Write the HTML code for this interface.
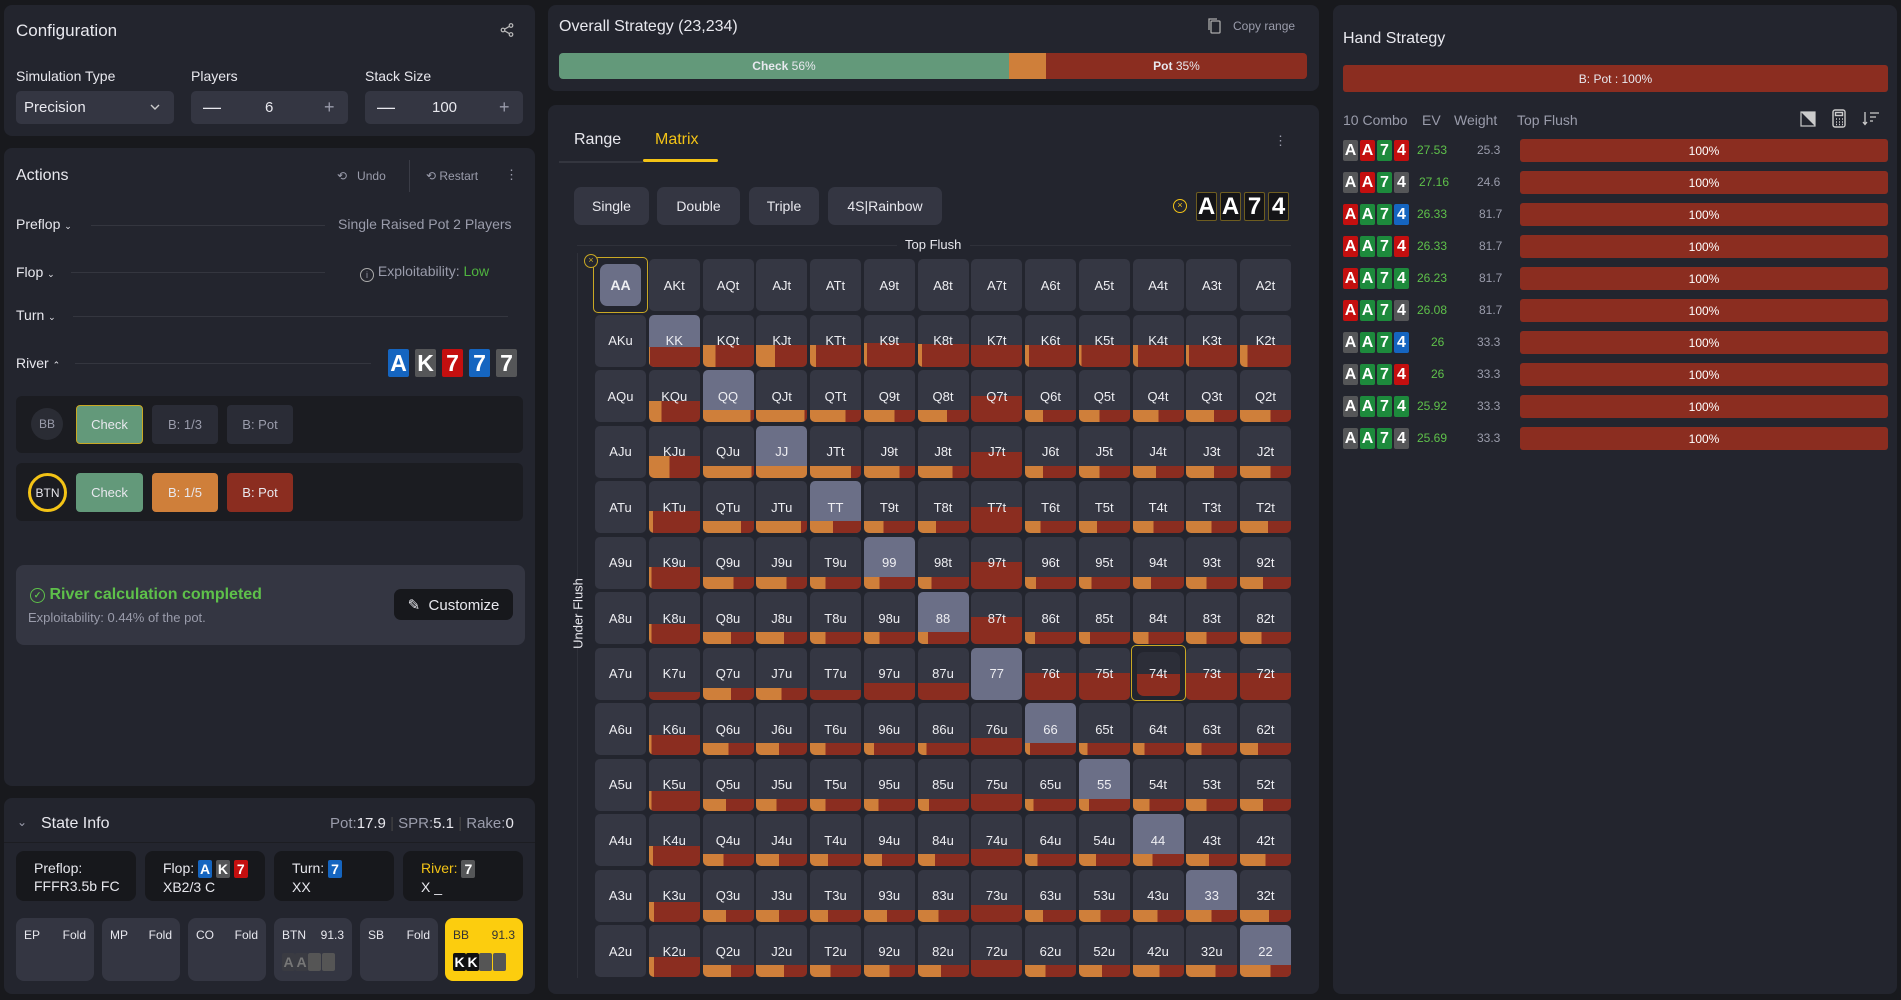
<!DOCTYPE html>
<html><head><meta charset="utf-8"><style>
*{box-sizing:border-box;margin:0;padding:0}
body{width:1901px;height:1000px;background:#18191d;font-family:"Liberation Sans",sans-serif;color:#e8e8ee;position:relative;overflow:hidden}
.a{position:absolute}
.pn{position:absolute;background:#23252e;border-radius:8px}
.g{color:#9a9cab}
.inp{position:absolute;background:#343642;border-radius:5px;height:33px;top:91px;font-size:15px;display:flex;align-items:center}
.card{display:inline-flex;align-items:center;justify-content:center;color:#fff;font-weight:bold;border-radius:2px;vertical-align:middle}
.bl{background:#1565c0}.gr{background:#555658}.rd{background:#c40f0f}.gn{background:#1d8a3c}
.btn{position:absolute;border-radius:4px;display:flex;align-items:center;justify-content:center;font-size:13px}
.line{position:absolute;height:1px;background:#34363f}
#grid{position:absolute;left:595px;top:259px;display:grid;grid-template-columns:repeat(13,51px);grid-auto-rows:52px;column-gap:2.75px;row-gap:3.5px}
#grid div{position:relative;background:#353743;border-radius:5px;overflow:hidden;display:flex;align-items:center;justify-content:center;font-size:13px;color:#eeeef2}
#grid div span{position:relative;z-index:1}
#grid div.p{background:#6b6f87}
#grid b{position:absolute;left:0;right:0;bottom:0;height:12px;background:linear-gradient(90deg,#cf7f3a var(--o),#8b2d20 var(--o))}
.fb{position:absolute;background:#343642;border-radius:7px;font-size:14px;display:flex;align-items:center;justify-content:center;height:38px;top:187px}
.st{position:absolute;top:851px;height:50px;width:120px;background:#17181c;border-radius:8px;font-size:14px;padding:8px 0 0 18px;line-height:18px}
.se{position:absolute;top:918px;height:63px;width:78px;background:#343642;border-radius:8px;font-size:12px}
.se .l{position:absolute;left:8px;top:10px}.se .r{position:absolute;right:8px;top:10px}
.row{position:absolute;left:1343px;height:23px;width:545px;font-size:12px}
.row .cs{position:absolute;left:0;top:1px}
.row .cs .card{width:15px;height:21px;font-size:16px;margin-right:2px}
.hb{position:absolute;left:177px;width:368px;height:23px;top:0;background:#8b2d20;border-radius:3px;display:flex;align-items:center;justify-content:center;font-size:12px;color:#fff}
</style></head><body>

<!-- Configuration -->
<div class="pn" style="left:4px;top:5px;width:531px;height:131px"></div>
<div class="a" style="left:16px;top:21px;font-size:17px">Configuration</div>
<svg class="a" style="left:500px;top:23px" width="14" height="14" viewBox="0 0 14 14" fill="none" stroke="#bbb" stroke-width="1.2"><circle cx="11" cy="2.5" r="1.8"/><circle cx="3" cy="7" r="1.8"/><circle cx="11" cy="11.5" r="1.8"/><path d="M4.6 6.1 9.4 3.4M4.6 7.9 9.4 10.6"/></svg>
<div class="a" style="left:16px;top:68px;font-size:14px">Simulation Type</div>
<div class="a" style="left:191px;top:68px;font-size:14px">Players</div>
<div class="a" style="left:365px;top:68px;font-size:14px">Stack Size</div>
<div class="inp" style="left:16px;width:158px;padding-left:8px">Precision<svg class="a" style="left:133px;top:12px" width="12" height="8" viewBox="0 0 12 8" fill="none" stroke="#ccc" stroke-width="1.4"><path d="M2 2l4 4 4-4"/></svg></div>
<div class="inp" style="left:191px;width:157px"><span class="a" style="left:12px;font-size:18px">—</span><span class="a" style="left:74px">6</span><span class="a g" style="left:133px;font-size:18px">+</span></div>
<div class="inp" style="left:365px;width:158px"><span class="a" style="left:12px;font-size:18px">—</span><span class="a" style="left:67px">100</span><span class="a g" style="left:134px;font-size:18px">+</span></div>

<!-- Actions -->
<div class="pn" style="left:4px;top:148px;width:531px;height:638px"></div>
<div class="a" style="left:16px;top:167px;font-size:16px">Actions</div>
<div class="a g" style="left:337px;top:169px;font-size:12px">⟲&nbsp;&nbsp;&nbsp;Undo</div>
<div class="a" style="left:409px;top:160px;width:1px;height:32px;background:#3a3c46"></div>
<div class="a g" style="left:426px;top:169px;font-size:12px">⟲ Restart</div>
<div class="a g" style="left:505px;top:167px;font-size:13px">⋮</div>

<div class="a" style="left:16px;top:216px;font-size:14px">Preflop <span style="font-size:9px">⌄</span></div>
<div class="line" style="left:91px;top:225px;width:234px"></div>
<div class="a g" style="left:338px;top:216px;font-size:14px">Single Raised Pot 2 Players</div>
<div class="a" style="left:16px;top:264px;font-size:14px">Flop <span style="font-size:9px">⌄</span></div>
<div class="line" style="left:71px;top:272px;width:254px"></div>
<div class="a g" style="left:360px;top:263px;font-size:14px"><span style="display:inline-block;width:14px;height:14px;border:1.3px solid #aaa;border-radius:50%;font-size:9px;text-align:center;line-height:12px;vertical-align:-2px">i</span> Exploitability: <span style="color:#4fb33f">Low</span></div>
<div class="a" style="left:16px;top:307px;font-size:14px">Turn <span style="font-size:9px">⌄</span></div>
<div class="line" style="left:73px;top:316px;width:435px"></div>
<div class="a" style="left:16px;top:355px;font-size:14px">River <span style="font-size:9px">⌃</span></div>
<div class="line" style="left:75px;top:363px;width:296px"></div>
<div class="a" style="left:388px;top:349px;font-size:0">
<span class="card bl" style="width:21px;height:28px;font-size:23px;margin-right:6px">A</span><span class="card gr" style="width:21px;height:28px;font-size:23px;margin-right:6px">K</span><span class="card rd" style="width:21px;height:28px;font-size:23px;margin-right:6px">7</span><span class="card bl" style="width:21px;height:28px;font-size:23px;margin-right:6px">7</span><span class="card gr" style="width:21px;height:28px;font-size:23px">7</span></div>

<div class="a" style="left:16px;top:396px;width:507px;height:57px;background:#1b1c21;border-radius:6px"></div>
<div class="a g" style="left:31px;top:408px;width:32px;height:32px;border-radius:50%;background:#2a2c34;font-size:12px;display:flex;align-items:center;justify-content:center">BB</div>
<div class="btn" style="left:76px;top:405px;width:67px;height:39px;background:#63997a;border:1.5px solid #c9a824">Check</div>
<div class="btn g" style="left:152px;top:405px;width:66px;height:39px;background:#2a2c36">B: 1/3</div>
<div class="btn g" style="left:227px;top:405px;width:66px;height:39px;background:#2a2c36">B: Pot</div>
<div class="a" style="left:16px;top:463px;width:507px;height:58px;background:#1b1c21;border-radius:6px"></div>
<div class="a" style="left:28px;top:473px;width:39px;height:39px;border-radius:50%;border:3.5px solid #f3c316;font-size:12px;display:flex;align-items:center;justify-content:center">BTN</div>
<div class="btn" style="left:76px;top:473px;width:67px;height:39px;background:#63997a">Check</div>
<div class="btn" style="left:152px;top:473px;width:66px;height:39px;background:#cf7f3a">B: 1/5</div>
<div class="btn" style="left:227px;top:473px;width:66px;height:39px;background:#8b2d20">B: Pot</div>

<div class="a" style="left:16px;top:565px;width:509px;height:80px;background:#343642;border-radius:8px"></div>
<div class="a" style="left:30px;top:586px;font-size:16px;font-weight:bold;color:#5ec04a"><span style="display:inline-block;width:15px;height:15px;border:1.5px solid #5ec04a;border-radius:50%;font-size:9px;text-align:center;line-height:12px;vertical-align:1px">✓</span> River calculation completed</div>
<div class="a g" style="left:28px;top:610px;font-size:13px">Exploitability: 0.44% of the pot.</div>
<div class="btn" style="left:394px;top:589px;width:119px;height:31px;background:#17181c;border-radius:7px;font-size:15px">✎&nbsp;&nbsp;Customize</div>

<!-- State Info -->
<div class="pn" style="left:4px;top:798px;width:531px;height:196px"></div>
<div class="a g" style="left:17px;top:815px;font-size:12px">⌄</div>
<div class="a" style="left:41px;top:815px;font-size:16px">State Info</div>
<div class="a g" style="left:330px;top:815px;font-size:15px">Pot:<span style="color:#e8e8ee">17.9</span> <span style="color:#444">|</span> SPR:<span style="color:#e8e8ee">5.1</span> <span style="color:#444">|</span> Rake:<span style="color:#e8e8ee">0</span></div>
<div class="line" style="left:4px;top:842px;width:531px;background:#1c1d22"></div>
<div class="st" style="left:16px">Preflop:<br>FFFR3.5b FC</div>
<div class="st" style="left:145px">Flop: <span class="card bl" style="width:14px;height:18px;font-size:14px">A</span> <span class="card gr" style="width:14px;height:18px;font-size:14px">K</span> <span class="card rd" style="width:14px;height:18px;font-size:14px">7</span><br>XB2/3 C</div>
<div class="st" style="left:274px">Turn: <span class="card bl" style="width:14px;height:18px;font-size:14px">7</span><br>XX</div>
<div class="st" style="left:403px"><span style="color:#f3c316">River:</span> <span class="card gr" style="width:14px;height:18px;font-size:14px">7</span><br>X _</div>
<div class="se" style="left:16px"><span class="l">EP</span><span class="r">Fold</span></div>
<div class="se" style="left:102px"><span class="l">MP</span><span class="r">Fold</span></div>
<div class="se" style="left:188px"><span class="l">CO</span><span class="r">Fold</span></div>
<div class="se" style="left:274px"><span class="l">BTN</span><span class="r">91.3</span><div class="a" style="left:8px;top:35px;font-size:0"><span class="card" style="width:13px;height:18px;font-size:14px;background:#3a3b42;color:#777">A</span><span class="card" style="width:13px;height:18px;font-size:14px;background:#3a3b42;color:#777">A</span><span class="card" style="width:13px;height:18px;background:#555"></span><span class="card" style="width:13px;height:18px;background:#555;margin-left:1px"></span></div></div>
<div class="se" style="left:360px"><span class="l">SB</span><span class="r">Fold</span></div>
<div class="se" style="left:445px;background:#fccd0e;color:#333"><span class="l">BB</span><span class="r">91.3</span><div class="a" style="left:8px;top:35px;font-size:0"><span class="card" style="width:13px;height:18px;font-size:14px;background:#111">K</span><span class="card" style="width:13px;height:18px;font-size:14px;background:#111">K</span><span class="card" style="width:13px;height:18px;background:#555"></span><span class="card" style="width:13px;height:18px;background:#555;margin-left:1px"></span></div></div>

<!-- Overall strategy -->
<div class="pn" style="left:548px;top:5px;width:771px;height:86px"></div>
<div class="a" style="left:559px;top:18px;font-size:16px">Overall Strategy (23,234)</div>
<svg class="a" style="left:1207px;top:17px" width="15" height="17" viewBox="0 0 15 17" fill="none" stroke="#aaa" stroke-width="1.3"><rect x="4" y="4" width="9" height="12" rx="1"/><path d="M2 13V2h8"/></svg>
<div class="a g" style="left:1233px;top:19px;font-size:12px">Copy range</div>
<div class="a" style="left:559px;top:53px;width:748px;height:26px;border-radius:4px;overflow:hidden;display:flex;font-size:12px;font-weight:bold">
<div style="width:450px;background:#63997a;display:flex;align-items:center;justify-content:center">Check&nbsp;<span style="font-weight:normal">56%</span></div>
<div style="width:37px;background:#cf7f3a"></div>
<div style="flex:1;background:#8b2d20;display:flex;align-items:center;justify-content:center">Pot&nbsp;<span style="font-weight:normal">35%</span></div></div>

<!-- Matrix panel -->
<div class="pn" style="left:548px;top:105px;width:771px;height:889px"></div>
<div class="a" style="left:574px;top:131px;font-size:16px">Range</div>
<div class="a" style="left:655px;top:131px;font-size:16px;color:#f3c316">Matrix</div>
<div class="a" style="left:559px;top:161px;width:84px;height:2px;background:#34363f"></div>
<div class="a" style="left:643px;top:159px;width:75px;height:3px;background:#f3c316;border-radius:2px"></div>
<div class="a g" style="left:1274px;top:133px;font-size:13px">⋮</div>
<div class="fb" style="left:574px;width:75px">Single</div>
<div class="fb" style="left:657px;width:83px">Double</div>
<div class="fb" style="left:749px;width:70px">Triple</div>
<div class="fb" style="left:828px;width:114px">4S|Rainbow</div>
<div class="a" style="left:1173px;top:199px;width:14px;height:14px;border:1.5px solid #f3c316;border-radius:50%;color:#f3c316;font-size:9px;text-align:center;line-height:11px">×</div>
<div class="a" style="left:1196px;top:192px;font-size:0"><span class="card" style="width:21px;height:29px;font-size:24px;background:#141417;border:1px solid #6e5d20;margin-right:3px">A</span><span class="card" style="width:21px;height:29px;font-size:24px;background:#141417;border:1px solid #6e5d20;margin-right:3px">A</span><span class="card" style="width:21px;height:29px;font-size:24px;background:#141417;border:1px solid #6e5d20;margin-right:3px">7</span><span class="card" style="width:21px;height:29px;font-size:24px;background:#141417;border:1px solid #6e5d20">4</span></div>
<div class="line" style="left:577px;top:245px;width:320px;background:#2f313a"></div>
<div class="a" style="left:905px;top:237px;font-size:13px">Top Flush</div>
<div class="line" style="left:970px;top:245px;width:321px;background:#2f313a"></div>
<div class="a" style="left:577px;top:253px;width:1px;height:725px;background:#2f313a"></div>
<div class="a" style="left:538px;top:606px;font-size:13px;transform:rotate(-90deg);width:80px;text-align:center">Under Flush</div>
<div class="a" style="left:593px;top:257px;width:55px;height:56px;border:1.5px solid #c9a824;border-radius:5px"></div>
<div class="a" style="left:584px;top:254px;width:14px;height:14px;border:1.5px solid #c9a824;border-radius:50%;background:#23252e;color:#c9a824;font-size:9px;text-align:center;line-height:11px;z-index:3">×</div>
<div class="a" style="left:1131px;top:645px;width:55px;height:56px;border:1.5px solid #c9a824;border-radius:5px;z-index:3"></div>

<div id="grid">
<div class="p" style="margin:5px;border-radius:7px;font-weight:bold;font-size:14px"><span>AA</span></div><div><span>AKt</span></div><div><span>AQt</span></div><div><span>AJt</span></div><div><span>ATt</span></div><div><span>A9t</span></div><div><span>A8t</span></div><div><span>A7t</span></div><div><span>A6t</span></div><div><span>A5t</span></div><div><span>A4t</span></div><div><span>A3t</span></div><div><span>A2t</span></div>
<div><span>AKu</span></div><div class="p"><span>KK</span><b style="height:20px;--o:2%"></b></div><div><span>KQt</span><b style="height:22px;--o:25%"></b></div><div><span>KJt</span><b style="height:22px;--o:37%"></b></div><div><span>KTt</span><b style="height:22px;--o:12%"></b></div><div><span>K9t</span><b style="height:24px;--o:6%"></b></div><div><span>K8t</span><b style="height:23px;--o:8%"></b></div><div><span>K7t</span><b style="height:22px;--o:0%"></b></div><div><span>K6t</span><b style="height:22px;--o:8%"></b></div><div><span>K5t</span><b style="height:22px;--o:5%"></b></div><div><span>K4t</span><b style="height:22px;--o:10%"></b></div><div><span>K3t</span><b style="height:22px;--o:6%"></b></div><div><span>K2t</span><b style="height:22px;--o:15%"></b></div>
<div><span>AQu</span></div><div><span>KQu</span><b style="height:21px;--o:25%"></b></div><div class="p"><span>QQ</span><b style="--o:93%"></b></div><div><span>QJt</span><b style="--o:95%"></b></div><div><span>QTt</span><b style="--o:70%"></b></div><div><span>Q9t</span><b style="--o:60%"></b></div><div><span>Q8t</span><b style="--o:57%"></b></div><div><span>Q7t</span><b style="height:26px;--o:0%"></b></div><div><span>Q6t</span><b style="--o:35%"></b></div><div><span>Q5t</span><b style="--o:40%"></b></div><div><span>Q4t</span><b style="--o:50%"></b></div><div><span>Q3t</span><b style="--o:55%"></b></div><div><span>Q2t</span><b style="--o:60%"></b></div>
<div><span>AJu</span></div><div><span>KJu</span><b style="height:22px;--o:40%"></b></div><div><span>QJu</span><b style="--o:95%"></b></div><div class="p"><span>JJ</span><b style="--o:100%"></b></div><div><span>JTt</span><b style="--o:80%"></b></div><div><span>J9t</span><b style="--o:70%"></b></div><div><span>J8t</span><b style="--o:68%"></b></div><div><span>J7t</span><b style="height:26px;--o:0%"></b></div><div><span>J6t</span><b style="--o:35%"></b></div><div><span>J5t</span><b style="--o:40%"></b></div><div><span>J4t</span><b style="--o:45%"></b></div><div><span>J3t</span><b style="--o:55%"></b></div><div><span>J2t</span><b style="--o:60%"></b></div>
<div><span>ATu</span></div><div><span>KTu</span><b style="height:22px;--o:8%"></b></div><div><span>QTu</span><b style="--o:75%"></b></div><div><span>JTu</span><b style="--o:88%"></b></div><div class="p"><span>TT</span><b style="--o:45%"></b></div><div><span>T9t</span><b style="--o:38%"></b></div><div><span>T8t</span><b style="--o:35%"></b></div><div><span>T7t</span><b style="height:26px;--o:0%"></b></div><div><span>T6t</span><b style="--o:30%"></b></div><div><span>T5t</span><b style="--o:35%"></b></div><div><span>T4t</span><b style="--o:40%"></b></div><div><span>T3t</span><b style="--o:50%"></b></div><div><span>T2t</span><b style="--o:55%"></b></div>
<div><span>A9u</span></div><div><span>K9u</span><b style="height:22px;--o:5%"></b></div><div><span>Q9u</span><b style="--o:60%"></b></div><div><span>J9u</span><b style="--o:60%"></b></div><div><span>T9u</span><b style="--o:30%"></b></div><div class="p"><span>99</span><b style="--o:30%"></b></div><div><span>98t</span><b style="--o:26%"></b></div><div><span>97t</span><b style="height:27px;--o:0%"></b></div><div><span>96t</span><b style="--o:22%"></b></div><div><span>95t</span><b style="--o:25%"></b></div><div><span>94t</span><b style="--o:35%"></b></div><div><span>93t</span><b style="--o:40%"></b></div><div><span>92t</span><b style="--o:45%"></b></div>
<div><span>A8u</span></div><div><span>K8u</span><b style="height:20px;--o:5%"></b></div><div><span>Q8u</span><b style="--o:55%"></b></div><div><span>J8u</span><b style="--o:55%"></b></div><div><span>T8u</span><b style="--o:30%"></b></div><div><span>98u</span><b style="--o:30%"></b></div><div class="p"><span>88</span><b style="--o:20%"></b></div><div><span>87t</span><b style="height:27px;--o:0%"></b></div><div><span>86t</span><b style="--o:20%"></b></div><div><span>85t</span><b style="--o:22%"></b></div><div><span>84t</span><b style="--o:30%"></b></div><div><span>83t</span><b style="--o:40%"></b></div><div><span>82t</span><b style="--o:42%"></b></div>
<div><span>A7u</span></div><div><span>K7u</span><b style="height:8px;--o:0%"></b></div><div><span>Q7u</span><b style="--o:55%"></b></div><div><span>J7u</span><b style="--o:50%"></b></div><div><span>T7u</span><b style="height:10px;--o:0%"></b></div><div><span>97u</span><b style="height:17px;--o:0%"></b></div><div><span>87u</span><b style="height:17px;--o:0%"></b></div><div class="p"><span>77</span></div><div><span>76t</span><b style="height:27px;--o:0%"></b></div><div><span>75t</span><b style="height:27px;--o:0%"></b></div><div style="margin:4px;border-radius:7px;background:#2c2e38"><span>74t</span><b style="height:22px;--o:0%"></b></div><div><span>73t</span><b style="height:27px;--o:0%"></b></div><div><span>72t</span><b style="height:27px;--o:0%"></b></div>
<div><span>A6u</span></div><div><span>K6u</span><b style="height:20px;--o:5%"></b></div><div><span>Q6u</span><b style="--o:50%"></b></div><div><span>J6u</span><b style="--o:45%"></b></div><div><span>T6u</span><b style="--o:30%"></b></div><div><span>96u</span><b style="--o:20%"></b></div><div><span>86u</span><b style="--o:17%"></b></div><div><span>76u</span><b style="height:17px;--o:0%"></b></div><div class="p"><span>66</span><b style="--o:10%"></b></div><div><span>65t</span><b style="--o:17%"></b></div><div><span>64t</span><b style="--o:23%"></b></div><div><span>63t</span><b style="--o:30%"></b></div><div><span>62t</span><b style="--o:35%"></b></div>
<div><span>A5u</span></div><div><span>K5u</span><b style="height:20px;--o:5%"></b></div><div><span>Q5u</span><b style="--o:45%"></b></div><div><span>J5u</span><b style="--o:40%"></b></div><div><span>T5u</span><b style="--o:30%"></b></div><div><span>95u</span><b style="--o:28%"></b></div><div><span>85u</span><b style="--o:22%"></b></div><div><span>75u</span><b style="height:17px;--o:0%"></b></div><div><span>65u</span><b style="--o:17%"></b></div><div class="p"><span>55</span><b style="--o:20%"></b></div><div><span>54t</span><b style="--o:32%"></b></div><div><span>53t</span><b style="--o:40%"></b></div><div><span>52t</span><b style="--o:45%"></b></div>
<div><span>A4u</span></div><div><span>K4u</span><b style="height:20px;--o:8%"></b></div><div><span>Q4u</span><b style="--o:40%"></b></div><div><span>J4u</span><b style="--o:45%"></b></div><div><span>T4u</span><b style="--o:35%"></b></div><div><span>94u</span><b style="--o:35%"></b></div><div><span>84u</span><b style="--o:33%"></b></div><div><span>74u</span><b style="height:17px;--o:0%"></b></div><div><span>64u</span><b style="--o:25%"></b></div><div><span>54u</span><b style="--o:33%"></b></div><div class="p"><span>44</span><b style="--o:38%"></b></div><div><span>43t</span><b style="--o:45%"></b></div><div><span>42t</span><b style="--o:50%"></b></div>
<div><span>A3u</span></div><div><span>K3u</span><b style="height:20px;--o:10%"></b></div><div><span>Q3u</span><b style="--o:45%"></b></div><div><span>J3u</span><b style="--o:45%"></b></div><div><span>T3u</span><b style="--o:35%"></b></div><div><span>93u</span><b style="--o:45%"></b></div><div><span>83u</span><b style="--o:40%"></b></div><div><span>73u</span><b style="height:17px;--o:0%"></b></div><div><span>63u</span><b style="--o:35%"></b></div><div><span>53u</span><b style="--o:42%"></b></div><div><span>43u</span><b style="--o:48%"></b></div><div class="p"><span>33</span><b style="--o:50%"></b></div><div><span>32t</span><b style="--o:57%"></b></div>
<div><span>A2u</span></div><div><span>K2u</span><b style="height:20px;--o:10%"></b></div><div><span>Q2u</span><b style="--o:55%"></b></div><div><span>J2u</span><b style="--o:55%"></b></div><div><span>T2u</span><b style="--o:40%"></b></div><div><span>92u</span><b style="--o:50%"></b></div><div><span>82u</span><b style="--o:45%"></b></div><div><span>72u</span><b style="height:17px;--o:0%"></b></div><div><span>62u</span><b style="--o:40%"></b></div><div><span>52u</span><b style="--o:45%"></b></div><div><span>42u</span><b style="--o:52%"></b></div><div><span>32u</span><b style="--o:58%"></b></div><div class="p"><span>22</span><b style="--o:60%"></b></div>
</div>

<!-- Hand strategy -->
<div class="pn" style="left:1333px;top:5px;width:564px;height:989px"></div>
<div class="a" style="left:1343px;top:30px;font-size:16px">Hand Strategy</div>
<div class="a" style="left:1343px;top:65px;width:545px;height:27px;background:#8b2d20;border-radius:3px;display:flex;align-items:center;justify-content:center;font-size:12px">B: Pot : 100%</div>
<div class="a g" style="left:1343px;top:112px;font-size:14px">10 Combo</div>
<div class="a g" style="left:1422px;top:112px;font-size:14px">EV</div>
<div class="a g" style="left:1454px;top:112px;font-size:14px">Weight</div>
<div class="a g" style="left:1517px;top:112px;font-size:14px">Top Flush</div>
<svg class="a" style="left:1800px;top:111px" width="16" height="16" viewBox="0 0 16 16"><rect x="1" y="1" width="14" height="14" fill="none" stroke="#ccc" stroke-width="1.2"/><path d="M1 1h14v14z" fill="#ccc"/></svg>
<svg class="a" style="left:1832px;top:109px" width="14" height="19" viewBox="0 0 14 19" fill="none" stroke="#ccc" stroke-width="1.4"><rect x="1" y="1" width="12" height="17" rx="2"/><rect x="3.5" y="3.5" width="7" height="3"/><path d="M4 10h1M7 10h1M10 10h1M4 13h1M7 13h1M10 13h1M4 15.5h1M7 15.5h1M10 15.5h1"/></svg>
<svg class="a" style="left:1862px;top:111px" width="18" height="15" viewBox="0 0 18 15" fill="none" stroke="#ccc" stroke-width="1.3"><path d="M3 1v12M1 11l2 2.5 2-2.5M8 2h9M8 6h6M8 10h3"/></svg>

<div class="row" style="top:139px"><div class="cs"><span class="card gr">A</span><span class="card rd">A</span><span class="card gn">7</span><span class="card rd">4</span></div><span class="a" style="left:74px;top:4px;color:#5ec04a">27.53</span><span class="a g" style="left:134px;top:4px">25.3</span><div class="hb">100%</div></div>
<div class="row" style="top:171px"><div class="cs"><span class="card gr">A</span><span class="card rd">A</span><span class="card gn">7</span><span class="card gr">4</span></div><span class="a" style="left:76px;top:4px;color:#5ec04a">27.16</span><span class="a g" style="left:134px;top:4px">24.6</span><div class="hb">100%</div></div>
<div class="row" style="top:203px"><div class="cs"><span class="card rd">A</span><span class="card gn">A</span><span class="card gn">7</span><span class="card bl">4</span></div><span class="a" style="left:74px;top:4px;color:#5ec04a">26.33</span><span class="a g" style="left:136px;top:4px">81.7</span><div class="hb">100%</div></div>
<div class="row" style="top:235px"><div class="cs"><span class="card rd">A</span><span class="card gn">A</span><span class="card gn">7</span><span class="card rd">4</span></div><span class="a" style="left:74px;top:4px;color:#5ec04a">26.33</span><span class="a g" style="left:136px;top:4px">81.7</span><div class="hb">100%</div></div>
<div class="row" style="top:267px"><div class="cs"><span class="card rd">A</span><span class="card gn">A</span><span class="card gn">7</span><span class="card gn">4</span></div><span class="a" style="left:74px;top:4px;color:#5ec04a">26.23</span><span class="a g" style="left:136px;top:4px">81.7</span><div class="hb">100%</div></div>
<div class="row" style="top:299px"><div class="cs"><span class="card rd">A</span><span class="card gn">A</span><span class="card gn">7</span><span class="card gr">4</span></div><span class="a" style="left:74px;top:4px;color:#5ec04a">26.08</span><span class="a g" style="left:136px;top:4px">81.7</span><div class="hb">100%</div></div>
<div class="row" style="top:331px"><div class="cs"><span class="card gr">A</span><span class="card gn">A</span><span class="card gn">7</span><span class="card bl">4</span></div><span class="a" style="left:88px;top:4px;color:#5ec04a">26</span><span class="a g" style="left:134px;top:4px">33.3</span><div class="hb">100%</div></div>
<div class="row" style="top:363px"><div class="cs"><span class="card gr">A</span><span class="card gn">A</span><span class="card gn">7</span><span class="card rd">4</span></div><span class="a" style="left:88px;top:4px;color:#5ec04a">26</span><span class="a g" style="left:134px;top:4px">33.3</span><div class="hb">100%</div></div>
<div class="row" style="top:395px"><div class="cs"><span class="card gr">A</span><span class="card gn">A</span><span class="card gn">7</span><span class="card gn">4</span></div><span class="a" style="left:74px;top:4px;color:#5ec04a">25.92</span><span class="a g" style="left:134px;top:4px">33.3</span><div class="hb">100%</div></div>
<div class="row" style="top:427px"><div class="cs"><span class="card gr">A</span><span class="card gn">A</span><span class="card gn">7</span><span class="card gr">4</span></div><span class="a" style="left:74px;top:4px;color:#5ec04a">25.69</span><span class="a g" style="left:134px;top:4px">33.3</span><div class="hb">100%</div></div>
</body></html>
